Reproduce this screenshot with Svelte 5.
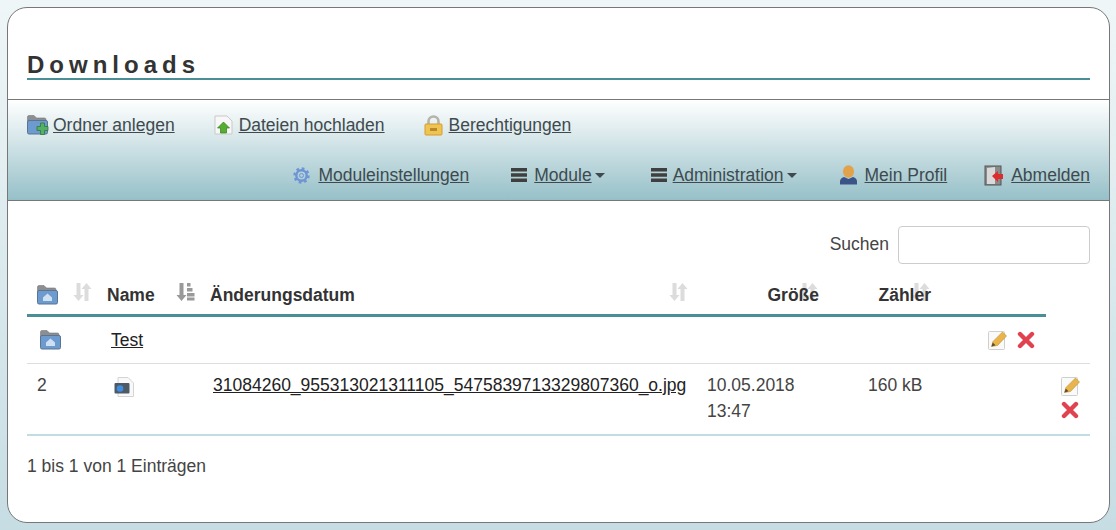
<script>
  const topLinks = [
    { label: "Ordner anlegen", icon: "newfolder" },
    { label: "Dateien hochladen", icon: "upload" },
    { label: "Berechtigungen", icon: "lock" },
  ];
  const bottomLinks = [
    { label: "Moduleinstellungen", icon: "gear", w: 25 },
    { label: "Module", icon: "bars", caret: true, w: 23 },
    { label: "Administration", icon: "bars", caret: true, w: 22 },
    { label: "Mein Profil", icon: "person", w: 26 },
    { label: "Abmelden", icon: "door", w: 27 },
  ];
</script>

{#snippet folder(plus)}
  <svg width="22" height="20" viewBox="0 0 22 20">
    <path d="M0.500 2q0-1.500 1.500-1.500h5l2.500 2.500h8q1.500 0 1.500 1.500V7H0.500z" fill="#8b8f93" stroke="#777" stroke-width=".6" />
    <rect x="0.500" y="5.500" width="20" height="13.500" rx="1.500" fill="#6d9bd0" stroke="#5b7590" />
    {#if plus}
      <path d="M13.500 8h4v3.500H21v4h-3.500V19.500h-4v-4H10v-4h3.500z" fill="#55b066" stroke="#2c7a3a" stroke-width=".8" />
    {:else}
      <path d="M6 12.500l4.500-4 4.500 4V16H6z" fill="#cfe0f2" />
    {/if}
  </svg>
{/snippet}

{#snippet sortIcon(active)}
  <svg width="19" height="20" viewBox="0 0 19 20" class:active>
    <path d="M3.500 1h4v12h3l-5 6-5-6h3z" />
    {#if active}
      <path d="M11 1h3.500v3.500H11zM11 6h5.500v3.500H11zM11 11h7.500v3.500H11zM11 15.500h7.500v3H11z" />
    {:else}
      <path d="M11.500 19h4V7h3l-5-6-5 6h3z" />
    {/if}
  </svg>
{/snippet}

{#snippet editIcon()}
  <svg width="19" height="20" viewBox="0 0 19 20">
    <rect x="0.500" y="1.500" width="16" height="18" rx="1" fill="#fafafa" stroke="#cfcfcf" />
    <path d="M3.500 16.500l1.500-5L14.500 2l4 4-9 9.500z" fill="#e8b44c" stroke="#c58f2d" stroke-width=".6" />
    <path d="M3.500 16.500l1.200-4 2.800 2.800z" fill="#5b4a2c" />
  </svg>
{/snippet}

{#snippet deleteIcon()}
  <svg width="18" height="18" viewBox="0 0 18 18">
    <path d="M3 3l12 12M15 3L3 15" stroke="#e0434f" stroke-width="4.400" stroke-linecap="round" />
  </svg>
{/snippet}

{#snippet navIcon(name)}
  {#if name === "newfolder"}
    {@render folder(true)}
  {:else if name === "upload"}
    <svg width="19" height="20" viewBox="0 0 19 20">
      <path d="M1 1h12l5 5v13H1z" fill="#f7f7f7" stroke="#c9c9c9" />
      <path d="M9.500 7l6 6h-3v5h-6v-5h-3z" fill="#55ae32" stroke="#2f7f1b" stroke-width=".7" />
    </svg>
  {:else if name === "lock"}
    <svg width="19" height="21" viewBox="0 0 19 21">
      <path d="M4.500 10V6.500a5 5 0 0 1 10 0V10" fill="none" stroke="#b5b3aa" stroke-width="2.600" />
      <rect x="1" y="9" width="17" height="11" rx="1" fill="#f0c453" stroke="#d39c2c" />
      <rect x="6" y="13" width="7" height="3" fill="#b98a2a" />
    </svg>
  {:else if name === "gear"}
    <svg width="17" height="17" viewBox="0 0 17 17">
      <circle cx="8.500" cy="8.500" r="5.200" fill="none" stroke="#6f94d6" stroke-width="2.400" />
      <circle cx="8.500" cy="8.500" r="7" fill="none" stroke="#6f94d6" stroke-width="2.400" stroke-dasharray="2.700 2.800" />
      <circle cx="8.500" cy="8.500" r="2" fill="none" stroke="#6f94d6" />
    </svg>
  {:else if name === "bars"}
    <svg width="16" height="16" viewBox="0 0 16 16">
      <path d="M0 1h16v3.500H0zM0 6.300h16v3.500H0zM0 11.600h16v3.500H0z" fill="#3f3f3f" />
    </svg>
  {:else if name === "person"}
    <svg width="19" height="20" viewBox="0 0 19 20">
      <ellipse cx="9.500" cy="6.500" rx="5.500" ry="6.200" fill="#e2a24c" />
      <path d="M1 19.500v-3q0-3.500 4-4.500l4.500 2 4.500-2q4 1 4 4.500v3z" fill="#3a5488" />
    </svg>
  {:else}
    <svg width="20" height="21" viewBox="0 0 20 21">
      <rect x="1" y="1" width="16" height="19" fill="#8a8a8a" stroke="#555" />
      <path d="M3 3l8-1v17H3z" fill="#d9d9d9" />
      <path d="M8 11l6-5v3h5v5h-5v3z" fill="#dd2c2c" />
    </svg>
  {/if}
{/snippet}

<div class="card">
  <h1>Downloads</h1>

  <nav>
    <div class="nav-row">
      {#each topLinks as item}
        <div class="nav-item">
          <span class="nav-icon">{@render navIcon(item.icon)}</span>
          <a href="#top">{item.label}</a>
        </div>
      {/each}
    </div>
    <div class="nav-row right">
      {#each bottomLinks as item}
        <div class="nav-item" class:dropdown={item.caret}>
          <span class="nav-icon" style="width:{item.w}px">{@render navIcon(item.icon)}</span>
          <a href="#top">{item.label}</a>
          {#if item.caret}<span class="caret"></span>{/if}
        </div>
      {/each}
    </div>
  </nav>

  <section class="content">
    <div class="search">
      <label for="q">Suchen</label>
      <input id="q" type="text" />
    </div>

    <div class="head">
      <div class="th">{@render folder(false)}<span class="sort">{@render sortIcon(false)}</span></div>
      <div class="th">Name<span class="sort">{@render sortIcon(true)}</span></div>
      <div class="th">Änderungsdatum<span class="sort">{@render sortIcon(false)}</span></div>
      <div class="th end">Größe<span class="sort">{@render sortIcon(false)}</span></div>
      <div class="th end">Zähler<span class="sort">{@render sortIcon(false)}</span></div>
      <div class="th"></div>
    </div>

    <div class="row folder-row">
      <div class="folder-cell">{@render folder(false)}</div>
      <div><a href="#top">Test</a></div>
      <div></div>
      <div class="actions inline">
        {@render editIcon()}
        {@render deleteIcon()}
      </div>
    </div>

    <div class="row file-row">
      <div>2</div>
      <div class="file-cell">
        <svg width="20" height="20" viewBox="0 0 20 20">
          <path d="M4 .5h10l5.500 5.500v13.500H4z" fill="#f8f8f8" stroke="#d4d4d4" />
          <rect x="0.500" y="6" width="15" height="10.500" rx="1" fill="#4d5a66" />
          <circle cx="6" cy="11.500" r="3.300" fill="#3f8de0" />
        </svg>
      </div>
      <div><a href="#top">31084260_955313021311105_5475839713329807360_o.jpg</a></div>
      <div>10.05.2018<br />13:47</div>
      <div>160 kB</div>
      <div class="actions">
        {@render editIcon()}
        {@render deleteIcon()}
      </div>
    </div>

    <p class="info">1 bis 1 von 1 Einträgen</p>
  </section>
</div>

<style>
  :global(body) {
    margin: 0;
    min-height: 530px;
    background: linear-gradient(to bottom, #eff6f7, #c6dde3);
  }
  .card {
    box-sizing: border-box;
    width: 1103px;
    height: 516px;
    margin: 7px 0 0 7px;
    background: #fff;
    border: 1px solid #777;
    border-radius: 20px;
    overflow: hidden;
    font-family: "Liberation Sans", Arial, sans-serif;
    font-size: 17.5px;
    color: #444;
  }
  h1 {
    margin: 41px 19px 0;
    padding-top: 1px;
    height: 28px;
    border-bottom: 2px solid #4a8f96;
    font-size: 24px;
    line-height: 29px;
    font-weight: bold;
    letter-spacing: 5px;
    color: #333;
  }
  nav {
    box-sizing: border-box;
    height: 102px;
    margin-top: 19px;
    padding: 0 19px;
    border-top: 1px solid #777;
    border-bottom: 1px solid #777;
    background: linear-gradient(to bottom, #fff, #96c0c8);
  }
  .nav-row {
    display: flex;
    align-items: center;
    gap: 39px;
    height: 50px;
  }
  .nav-row.right {
    justify-content: flex-end;
    gap: 37px;
  }
  .nav-item {
    display: flex;
    align-items: center;
  }
  .nav-item.dropdown {
    margin-left: 5px;
  }
  .nav-item.dropdown + .dropdown {
    margin-left: 9px;
  }
  .nav-item.dropdown + .nav-item:not(.dropdown) {
    margin-left: 5px;
  }
  .nav-icon {
    display: flex;
    width: 26px;
  }
  .nav-row:first-child .nav-item:not(:first-child) .nav-icon {
    width: 25px;
  }
  a {
    color: inherit;
  }
  nav a {
    color: #404a4e;
  }
  .caret {
    margin-left: 3px;
    border-top: 5px solid #404a4e;
    border-left: 5px solid transparent;
    border-right: 5px solid transparent;
  }
  .content {
    padding: 25px 19px 0;
  }
  .search {
    display: flex;
    justify-content: flex-end;
    align-items: center;
    gap: 9px;
  }
  label {
    margin-top: -2px;
  }
  input {
    box-sizing: border-box;
    width: 192px;
    height: 38px;
    border: 1px solid #ccc;
    border-radius: 4px;
  }
  .head {
    display: grid;
    grid-template-columns: 70px 103px 498px 130px 112px 106px;
    width: 1019px;
    margin-top: 10px;
    border-bottom: 3px solid #4a8f96;
    box-sizing: border-box;
    height: 43px;
    position: relative;
    z-index: 0;
  }
  .th {
    position: relative;
    padding: 2px 10px 0;
    height: 40px;
    display: flex;
    align-items: center;
    font-weight: bold;
    color: #333;
    box-sizing: border-box;
  }
  .th.end {
    justify-content: flex-end;
    padding-right: 9px;
  }
  .th:last-of-type {
    padding-right: 10px;
  }
  .sort {
    position: absolute;
    right: 5px;
    top: 8px;
    display: flex;
    z-index: -1;
  }
  .th:nth-child(3) .sort,
  .th.end .sort {
    right: 10px;
  }
  .sort svg {
    fill: #dcdcdc;
  }
  .sort svg.active {
    fill: #999;
  }
  .row {
    display: grid;
    border-bottom: 1px solid #ddd;
    box-sizing: border-box;
  }
  .row > div {
    padding: 0 10px;
  }
  .folder-row {
    grid-template-columns: 74px 102px 775px 1fr;
    height: 47px;
    align-items: center;
    color: #222;
  }
  .folder-row .folder-cell {
    padding-left: 13px;
    display: flex;
  }
  .file-row {
    grid-template-columns: 74px 102px 494px 161px 193px 1fr;
    height: 72px;
    padding-top: 8px;
    line-height: 26px;
    border-bottom: 2px solid #c2dce4;
  }
  .row a {
    color: #222;
  }
  .file-row .file-cell {
    padding-left: 13px;
    padding-top: 5px;
    display: flex;
    align-items: flex-start;
  }
  .actions {
    display: flex;
    flex-direction: column;
    align-items: flex-start;
    gap: 5px;
    padding-top: 4px !important;
  }
  .actions.inline {
    flex-direction: row;
    align-items: center;
    gap: 10px;
    padding-top: 0 !important;
  }
  .info {
    margin: 19px 0 0;
    line-height: 22px;
  }
</style>
